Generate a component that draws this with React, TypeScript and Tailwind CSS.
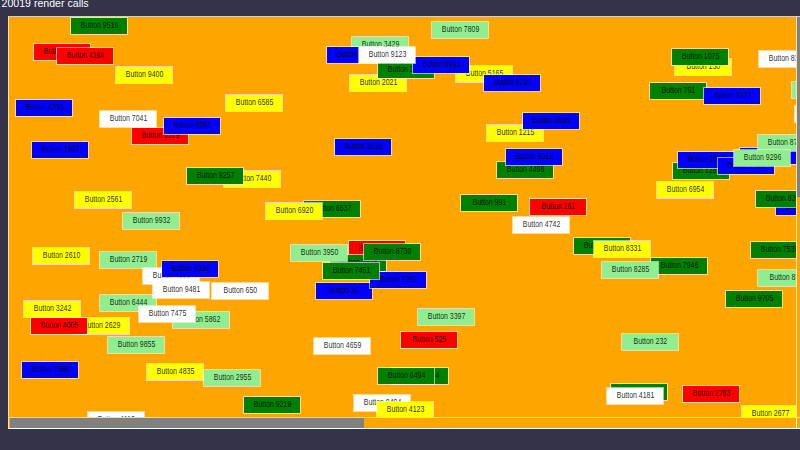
type Tone = "g" | "r" | "y" | "b" | "w" | "l";

const tones: Record<Tone, string> = {
  g: "bg-[#008000]",
  r: "bg-[#ff0000]",
  y: "bg-[#ffff00]",
  b: "bg-[#0000ff]",
  w: "bg-white",
  l: "bg-[#90ee90]",
};

// [number, tone, x, y] in paint order; coordinates are measured from the page corner.
const items: [number, Tone, number, number][] = [
  [9516, "g", 70, 17],
  [4312, "r", 33, 43],
  [4164, "r", 56, 47],
  [9400, "y", 115, 66],
  [4700, "b", 15, 99],
  [6319, "r", 131, 127],
  [7041, "w", 99, 110],
  [6582, "b", 163, 117],
  [1687, "b", 31, 141],
  [7809, "l", 431, 21],
  [3429, "l", 351, 36],
  [4127, "b", 326, 46],
  [2021, "y", 349, 74],
  [2274, "g", 377, 61],
  [5165, "y", 455, 65],
  [8993, "b", 412, 56],
  [9123, "w", 358, 46],
  [8720, "b", 483, 74],
  [6585, "y", 225, 94],
  [3538, "b", 334, 138],
  [1215, "y", 486, 124],
  [8955, "b", 522, 112],
  [4498, "g", 496, 161],
  [8012, "b", 505, 148],
  [130, "y", 674, 58],
  [1075, "g", 671, 48],
  [761, "g", 649, 82],
  [3131, "b", 703, 87],
  [8312, "w", 758, 50],
  [5210, "l", 791, 81],
  [6120, "w", 794, 105],
  [6017, "b", 739, 147],
  [8721, "l", 757, 134],
  [1280, "g", 672, 162],
  [2716, "b", 677, 151],
  [7788, "b", 717, 157],
  [9296, "l", 733, 149],
  [2561, "y", 74, 191],
  [9932, "l", 122, 212],
  [7440, "y", 223, 170],
  [9257, "g", 186, 167],
  [6537, "g", 303, 200],
  [6920, "y", 265, 202],
  [991, "g", 460, 194],
  [161, "r", 529, 198],
  [4742, "w", 512, 216],
  [6954, "y", 656, 181],
  [8007, "b", 775, 198],
  [8306, "g", 755, 190],
  [2610, "y", 32, 247],
  [2719, "l", 99, 251],
  [4000, "w", 142, 267],
  [4038, "b", 161, 260],
  [6444, "l", 99, 294],
  [9481, "w", 152, 281],
  [650, "w", 211, 282],
  [5035, "r", 348, 240],
  [2878, "g", 329, 254],
  [3950, "l", 290, 244],
  [8730, "g", 363, 243],
  [16, "b", 315, 282],
  [2262, "b", 369, 271],
  [7451, "g", 322, 262],
  [4470, "g", 573, 237],
  [7946, "g", 650, 257],
  [8331, "y", 593, 240],
  [8285, "l", 601, 261],
  [7536, "g", 750, 241],
  [835, "l", 757, 269],
  [9705, "g", 725, 290],
  [3242, "y", 23, 300],
  [2629, "y", 72, 317],
  [4005, "r", 30, 317],
  [5862, "l", 172, 311],
  [7475, "w", 138, 305],
  [9855, "l", 107, 336],
  [7388, "b", 21, 361],
  [4835, "y", 146, 363],
  [4110, "w", 87, 411],
  [2955, "l", 203, 369],
  [4659, "w", 313, 337],
  [9219, "g", 243, 396],
  [9494, "w", 353, 394],
  [4123, "y", 376, 401],
  [3044, "g", 391, 367],
  [6494, "g", 377, 367],
  [3397, "l", 417, 308],
  [525, "r", 400, 331],
  [232, "l", 621, 333],
  [5630, "g", 610, 383],
  [4181, "w", 606, 387],
  [2783, "r", 682, 385],
  [2677, "y", 741, 405],
];

export default function App() {
  return (
    <div className="flex h-[450px] w-[800px] flex-col overflow-hidden bg-[#333349] font-['Liberation_Sans',Arial,sans-serif]">
      <header className="h-4 shrink-0 overflow-hidden pl-[1.5px]">
        <h1 className="-mt-[3px] text-[10.6px] leading-[12px] text-white">20019 render calls</h1>
      </header>
      <main className="ml-2 flex h-[413px] flex-col border-b border-l border-t border-b-white border-l-[#ffe0b0] border-t-[#e0ccb0] bg-[#ffa500]">
        <div className="flex h-[400px] shrink-0">
          <div className="relative w-[787px] shrink-0 overflow-hidden">
            {items.map(([id, tone, x, y]) => (
              <button
                key={id}
                className={`absolute flex h-[18px] w-[58px] items-center justify-center whitespace-nowrap border border-white/60 bg-clip-padding pb-[0.5px] pl-[0.5px] text-[8px] leading-none text-black/85 ${tones[tone]}`}
                style={{ left: x - 9, top: y - 17 }}
              >
                <span className="block scale-x-[0.87] scale-y-[1.06]">Button {id}</span>
              </button>
            ))}
          </div>
          <div className="flex-1 border-l border-[#ffe4bb]">
            <div className="h-[180px] bg-[#808080]" />
          </div>
        </div>
        <div className="flex flex-1 border-t border-[#ffd899]">
          <div className="w-[787px] pl-px">
            <div className="h-full w-[354px] bg-[#808080]" />
          </div>
          <div className="flex-1 border-l border-white" />
        </div>
      </main>
    </div>
  );
}
